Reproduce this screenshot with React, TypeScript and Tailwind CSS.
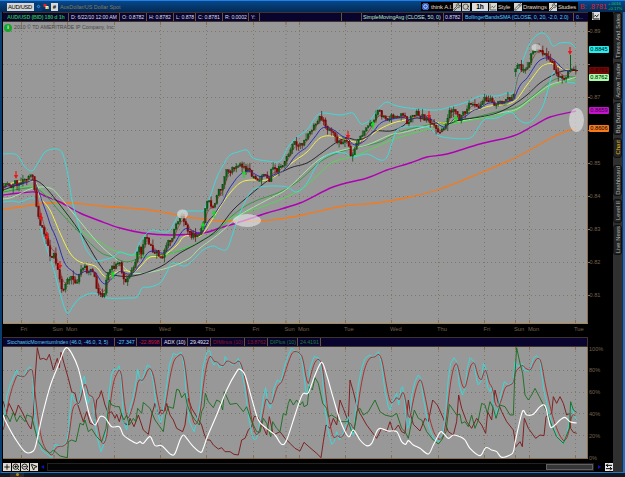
import { ArrowLeftRight, ChartLine, Disc, MousePointer2, Pencil, Plus, Search, Wrench, ZoomIn, ZoomOut } from "lucide-react"

type Point = [number, number]

const parse = (s: string): Point[] => s.split(" ").map((p) => p.split(",").map(Number) as Point)

const at = (pts: Point[], x: number) => {
  const i = pts.findIndex((p) => p[0] >= x)
  if (i === -1) return pts[pts.length - 1][1]
  if (i === 0) return pts[0][1]
  const [x0, y0] = pts[i - 1]
  const [x1, y1] = pts[i]
  return y0 + ((y1 - y0) * (x - x0)) / (x1 - x0 || 1)
}

// Catmull-Rom spline through the points
function smooth(s: string) {
  const p = parse(s)
  let d = `M${p[0]}`
  for (let i = 0; i < p.length - 1; i++) {
    const a = p[i - 1] ?? p[i]
    const b = p[i]
    const c = p[i + 1]
    const e = p[i + 2] ?? c
    d += `C${b[0] + (c[0] - a[0]) / 6},${b[1] + (c[1] - a[1]) / 6} ${c[0] - (e[0] - b[0]) / 6},${c[1] - (e[1] - b[1]) / 6} ${c}`
  }
  return d
}

function ema(values: Point[], alpha: number) {
  let y = values[0][1]
  return values.map(([x, v]) => {
    y += (v - y) * alpha
    return `${x},${y.toFixed(1)}`
  }).join(" ")
}

const price = parse(
  "3,188 8,181 11,187 15,183 20,182 26,180 31,175 33,179 35,190 36,205 39,221 43,232 47,242 50,257 54,253 57,268 60,280 62,291 66,285 70,276 76,284 80,270 84,264 87,275 92,266 95,280 98,292 101,297 104,292 108,275 112,268 118,262 121,266 124,280 128,278 131,270 135,266 138,246 141,255 144,238 148,240 151,248 156,252 160,258 163,254 166,246 172,238 177,222 181,216 185,220 190,235 196,237 200,233 203,225 206,202 210,204 213,208 218,190 222,191 226,170 231,171 237,164 242,166 248,169 253,179 259,182 264,172 269,182 272,168 277,172 283,164 288,155 292,144 298,144 305,143 310,130 315,124 320,115 325,126 330,131 335,137 341,144 347,140 351,158 356,145 362,137 370,125 378,112 385,117 395,117 402,116 405,119 408,126 412,116 417,114 423,117 428,120 433,127 440,133 445,130 448,114 455,109 459,122 464,113 470,103 477,107 485,97 491,101 496,106 502,101 510,98 514,97 516,64 520,66 525,73 530,58 536,48 543,54 550,58 556,71 560,78 565,77 570,70 573,68 576,70"
)

const noise = (i: number) => {
  const v = Math.sin(i * 12.9898 + 4.1) * 43758.5453
  return v - Math.floor(v)
}

const STEP = 1.94
const closes: Point[] = Array.from({ length: 296 }, (_, i) => {
  const x = 3.5 + i * STEP
  return [x, at(price, x) + (noise(i) - 0.5) * 6]
})
const candles = closes.map(([x, close], i) => {
  const prev = closes[i - 1]?.[1] ?? close
  const open = Math.abs(close - prev) > 18 ? close + 3 : prev
  return {
    x,
    up: close < open,
    top: Math.min(open, close),
    h: Math.max(1.4, Math.abs(close - open)),
    high: Math.min(open, close) - noise(i + 500) ** 2 * 6,
    low: Math.max(open, close) + noise(i + 900) ** 2 * 6,
  }
})
const trend = closes.map(([x]) => [x, at(price, x)] as Point)

const averages = [
  { c: "#f47a1c", w: 1.3, s: "3,209 20,207 37,204 53,203 73,203 100,206 140,209 167,213 187,217 203,219 220,221 260,221 280,219 307,214 343,206 377,203 410,197 440,189 480,173 517,157 553,137 576,128" },
  { c: "#b000b4", w: 1.4, s: "3,195 20,193 35,192 45,196 60,202 80,213 100,221 120,228 143,233 170,235 203,233 220,228 243,221 267,213 300,203 333,187 367,178 387,170 410,163 427,157 447,154 480,144 513,136 533,126 550,117 576,111" },
  { c: "#2a9a38", w: 0.9, s: "3,192 33,188 47,197 60,212 80,233 100,252 113,257 127,262 143,257 163,255 187,248 210,236 217,232 233,215 253,202 280,192 300,180 320,162 340,152 360,147 380,142 400,132 433,124 467,119 500,111 517,107 533,96 550,82 563,77 576,77" },
  { c: "#48e048", w: 0.9, s: "3,191 33,186 47,194 60,206 80,230 100,242 113,250 133,255 160,256 180,250 200,242 217,230 233,217 267,205 300,190 320,173 333,162 357,155 387,142 400,137 433,128 467,121 500,115 517,110 533,98 550,87 567,81 576,80" },
  { c: "#a6eba6", w: 0.9, s: "3,199 13,197 33,188 50,188 60,197 73,213 87,230 100,245 117,260 133,273 160,270 187,260 200,248 220,233 240,215 267,200 287,189 307,170 323,157 343,150 367,145 390,135 405,132 433,125 467,120 500,113 517,109 533,97 550,85 567,80 576,77" },
  { c: "#1c1c24", w: 0.9, s: "3,190 20,184 32,180 43,185 60,205 80,232 100,265 110,274 133,276 160,267 180,253 200,242 217,230 233,210 250,195 270,179 290,168 307,163 323,152 337,142 347,138 357,140 367,137 375,131 391,131 403,126 413,118 433,121 447,124 460,120 480,117 497,113 513,105 527,95 540,83 553,75 563,71 576,70" },
  { c: "#f4f04c", w: 1, s: "3,185 33,181 40,197 50,210 60,233 70,253 80,262 95,266 103,275 108,277 115,273 123,270 133,272 140,267 150,257 163,256 177,245 185,236 200,236 210,223 220,207 230,193 240,183 250,180 267,180 280,173 293,162 307,152 320,138 333,136 347,140 357,142 367,138 380,129 393,123 405,120 417,117 427,118 437,122 447,123 457,118 467,112 480,109 490,106 513,102 527,85 540,68 547,64 553,64 563,69 576,71" },
  { c: "#35e0e0", w: 0.9, s: "3,154 15,154 20,159 25,167 32,171 38,163 45,152 54,149 60,150 63,155 67,170 72,200 78,223 85,247 95,260 103,260 113,257 120,252 133,255 140,242 147,233 153,230 163,232 170,230 180,213 190,211 202,211 205,208 210,197 217,177 225,162 230,155 238,152 247,150 253,158 267,161 280,161 288,147 297,137 307,130 315,118 322,113 340,115 350,113 354,114 360,123 363,124 370,120 380,107 387,102 397,106 417,109 437,110 450,107 467,102 480,96 497,96 507,93 513,93 517,80 523,60 530,43 537,35 543,33 548,37 553,46 560,43 570,43 576,48" },
  { c: "#35e0e0", w: 0.9, s: "3,202 13,201 20,202 33,198 37,207 43,237 53,267 60,293 67,313 73,306 80,298 93,293 107,298 127,298 137,297 142,288 150,287 160,283 167,272 172,263 185,266 195,258 203,250 213,246 220,249 227,249 233,233 240,213 250,193 260,187 275,186 287,187 297,192 307,183 315,168 323,158 333,153 345,153 353,157 367,154 380,160 387,157 393,140 400,128 427,127 437,135 450,138 470,138 478,128 485,119 497,118 507,113 513,113 517,118 525,123 533,120 542,108 547,93 553,73 558,77 567,82 576,83" },
]

// Lower study, three units per pixel
const smi = "9,315 20,215 30,180 50,135 58,158 72,155 80,135 90,125 97,140 100,200 105,270 115,345 125,375 155,398 160,375 165,358 185,365 200,350 205,320 212,240 216,205 222,225 235,240 240,215 247,170 253,153 258,185 264,235 272,215 280,220 283,280 292,340 303,380 312,355 320,310 326,215 334,150 342,132 350,135 357,122 364,160 370,290 380,315 390,250 400,215 408,170 413,133 418,155 425,172 432,150 442,120 450,125 460,170 470,255 482,292 490,260 500,180 508,120 520,85 530,90 543,82 552,120 558,200 568,290 582,320 590,290 600,240 608,130 618,90 622,80 630,78 636,110 642,120 650,108 658,127 672,122 675,95 690,115 700,120 715,100 722,125 735,190 745,270 755,325 762,345 770,340 780,290 790,220 797,188 803,235 810,250 818,220 822,190 832,165 842,172 855,120 865,90 875,70 895,85 905,100 912,150 918,205 925,190 930,130 942,95 955,98 965,130 975,250 985,320 995,358 1003,350 1010,320 1018,345 1027,330 1035,310 1045,275 1052,300 1060,330 1068,250 1075,180 1085,130 1095,100 1110,90 1120,98 1135,80 1145,120 1155,200 1165,245 1170,255 1180,225 1190,205 1196,240 1203,190 1208,185 1215,240 1222,310 1228,300 1235,210 1245,170 1255,150 1262,160 1270,220 1285,300 1300,340 1318,350 1330,320 1338,250 1345,160 1352,115 1362,98 1370,110 1378,180 1387,210 1395,190 1402,130 1410,98 1422,110 1430,165 1435,180 1445,165 1450,115 1458,130 1462,185 1470,200 1475,185 1485,275 1495,245 1505,200 1513,170 1525,180 1540,170 1545,110 1552,125 1568,115 1572,135 1590,138 1600,100 1610,92 1620,105 1632,200 1645,250 1655,295 1675,340 1690,357 1700,330 1708,290 1713,235 1722,270 1730,285"
const smiPoints = parse(smi)
const signal = ema(Array.from({ length: 430 }, (_, i) => [9 + i * 4, at(smiPoints, 9 + i * 4)] as Point), 0.36)

const diMinus = "9,228 20,262 27,235 45,272 55,240 65,258 85,300 93,312 100,270 106,150 112,68 120,103 130,100 140,105 148,88 160,135 172,100 178,128 183,82 192,115 205,160 215,200 225,205 232,235 250,290 260,260 270,295 282,300 290,225 298,215 304,197 315,240 325,265 335,260 345,280 350,268 358,290 365,265 372,295 385,300 390,280 402,305 415,270 430,315 445,328 455,270 465,235 475,270 482,255 495,258 500,235 510,270 520,285 530,310 548,320 555,300 565,220 575,250 590,275 605,300 612,325 620,345 630,345 640,360 655,372 665,368 675,380 690,380 702,388 715,390 725,345 735,340 745,315 755,305 762,275 772,275 785,295 800,330 808,275 820,330 840,320 855,340 870,355 885,370 900,378 912,352 930,368 950,385 963,398 970,350 978,300 990,310 1000,280 1010,300 1020,225 1030,250 1045,290 1050,165 1060,200 1070,240 1080,265 1100,300 1130,340 1145,310 1160,320 1170,290 1180,320 1195,300 1205,320 1215,325 1225,225 1232,270 1240,298 1260,318 1275,280 1285,290 1298,225 1312,240 1330,280 1345,320 1360,330 1370,290 1376,210 1385,250 1400,290 1415,310 1430,280 1445,300 1457,325 1463,260 1475,285 1485,195 1495,235 1505,260 1520,290 1540,315 1548,365 1560,350 1567,365 1573,280 1585,310 1607,340 1620,330 1632,332 1638,275 1655,265 1660,215 1670,235 1680,215 1690,235 1700,270 1710,265 1712,310 1720,322 1730,325"
const diPlus = "9,275 20,270 30,290 40,262 50,290 60,272 75,290 80,270 95,275 105,315 115,350 130,370 150,385 160,375 180,393 202,398 205,350 215,345 228,350 240,295 250,300 255,285 265,320 275,312 290,335 305,350 318,310 328,225 335,240 350,245 358,245 365,270 372,285 380,270 388,300 400,280 407,290 413,250 425,265 430,232 450,250 465,285 490,320 497,270 505,245 520,250 530,193 537,195 545,218 555,205 562,240 572,265 585,285 598,300 605,260 612,245 616,205 625,230 640,248 650,225 660,230 668,255 673,200 690,238 710,235 730,260 740,245 755,290 770,320 780,322 790,280 800,295 812,335 818,290 830,310 840,320 850,265 858,270 865,235 870,222 880,240 890,225 900,240 908,230 912,245 922,240 928,185 937,195 945,158 955,175 968,235 980,250 985,275 995,270 1010,280 1020,290 1045,290 1055,320 1062,320 1070,260 1080,250 1090,270 1105,260 1125,225 1140,260 1155,270 1175,275 1190,265 1205,310 1215,320 1225,340 1235,290 1243,255 1255,280 1265,285 1280,320 1300,345 1315,357 1325,345 1338,320 1348,238 1360,255 1370,270 1380,268 1385,295 1395,290 1405,305 1415,270 1425,310 1435,285 1445,235 1455,240 1462,265 1470,230 1480,250 1488,280 1500,240 1515,245 1530,270 1540,270 1544,160 1550,68 1560,115 1568,145 1575,210 1585,225 1595,210 1605,190 1618,215 1628,235 1640,260 1655,300 1670,335 1690,355 1698,335 1708,310 1712,230 1720,255 1730,262"
const adx = "9,270 20,295 45,340 75,380 100,378 110,350 125,280 150,185 175,120 190,80 200,68 215,85 235,130 255,215 270,275 285,300 300,275 315,278 335,305 358,305 370,330 390,345 410,355 420,350 430,355 450,335 465,362 485,362 512,388 525,385 540,345 550,330 560,340 580,365 602,382 610,370 622,335 650,270 680,195 710,140 720,133 735,150 755,220 775,285 800,310 825,330 845,358 860,345 885,270 900,225 910,205 925,203 945,150 965,112 980,150 1000,220 1020,285 1045,335 1060,315 1080,345 1100,362 1115,355 1130,320 1140,310 1165,318 1190,320 1205,350 1217,358 1225,347 1240,360 1260,370 1285,387 1300,360 1320,322 1330,325 1345,340 1360,330 1380,335 1395,345 1410,370 1440,392 1457,368 1475,375 1490,380 1505,397 1530,390 1540,380 1548,340 1567,260 1580,270 1600,268 1620,245 1635,242 1645,280 1652,307 1665,300 1680,285 1695,277 1710,290 1730,294"

const days = [21.5, 54, 67.5, 114.5, 160.5, 206.5, 253.5, 286, 299.5, 345.5, 391.5, 438.5, 484.5, 515.5, 529.5, 575.5]
const dayNames = ["Fri", "Sun", "Mon", "Tue", "Wed", "Thu", "Fri", "Sun", "Mon", "Tue", "Wed", "Thu", "Fri", "Sun", "Mon", "Tue"]
const levels = [31.5, 64.5, 97.5, 130.5, 163.5, 196.5, 229.5, 262.5, 295.5]

const sells = [[16, 175], [41, 217], [47, 236], [60, 265], [348, 135], [429, 115], [570, 51]]
const buys = [[113, 275], [203, 226], [214, 214], [244, 174], [373, 125], [456, 119]]

function PriceChart() {
  return (
    <svg viewBox="3 22 584 301" className="block h-[301px] w-[584px] bg-[#989898]">
      <g stroke="#77705a" strokeWidth="0.8" strokeDasharray="1 3">
        {days.map((x) => <path key={x} d={`M${x} 22V323`} />)}
        {levels.map((y) => <path key={y} d={`M3 ${y}H587`} />)}
      </g>
      <g stroke="#8c7047">
        {days.map((x) => <path key={x} d={`M${x} 22v3M${x} 320v3`} />)}
      </g>
      <g fill="none">
        {averages.map((a, i) => <path key={i} d={smooth(a.s)} stroke={a.c} strokeWidth={a.w} />)}
      </g>
      {candles.map((c) => (
        <g key={c.x} fill={c.up ? "#046014" : "#860404"} stroke={c.up ? "#064a10" : "#680606"}>
          <path d={`M${c.x} ${c.high}V${c.low}`} strokeWidth="0.7" />
          <rect x={c.x - 0.85} y={c.top} width="1.7" height={c.h} strokeWidth="0.3" />
        </g>
      ))}
      <g fill="none">
        <polyline points={ema(trend, 0.16)} stroke="#2222b0" strokeWidth="0.9" />
        <polyline points={ema(trend, 0.4)} stroke="#9a2222" strokeWidth="0.6" />
      </g>
      <path d="M570.5 55V72" stroke="#0a6018" />
      <path d="M572 70.5h6" stroke="#7a0808" />
      <g fill="#e8e8e8" fillOpacity="0.62">
        <ellipse cx="182.5" cy="214" rx="5.5" ry="4.5" />
        <ellipse cx="247" cy="220.5" rx="14" ry="6.5" />
        <ellipse cx="536" cy="47.5" rx="4.5" ry="3.5" />
        <ellipse cx="576.5" cy="120" rx="7.5" ry="12" />
      </g>
      {sells.map(([x, y]) => <path key={x} d={`M${x - 0.6} ${y - 4}h1.2v4h1.6L${x} ${y + 4}l-2.2-4h1.6z`} fill="#f01414" />)}
      {buys.map(([x, y]) => <path key={x} d={`M${x - 0.6} ${y + 4}h1.2v-4h1.6L${x} ${y - 4}l-2.2 4h1.6z`} fill="#10e020" />)}
    </svg>
  )
}

function StudyChart() {
  return (
    <svg viewBox="9 66 1752 333" className="block h-[111px] w-[584px] bg-[#989898]">
      <g stroke="#77705a" strokeWidth="2.4" strokeDasharray="3 9">
        {days.map((x) => <path key={x} d={`M${x * 3} 66V399`} />)}
        {[136.5, 202.5, 265.5, 331.5].map((y) => <path key={y} d={`M9 ${y}H1761`} />)}
      </g>
      <g stroke="#8c7047" strokeWidth="3">
        {days.map((x) => <path key={x} d={`M${x * 3} 66v9M${x * 3} 390v9`} />)}
      </g>
      <g fill="none" strokeWidth="2.8">
        <polyline points={diMinus} stroke="#7c1a1a" />
        <polyline points={smi} stroke="#35dcdc" />
        <polyline points={signal} stroke="#a82c2c" />
        <polyline points={diPlus} stroke="#1c6e22" />
        <path d={smooth(adx)} stroke="#ffffff" strokeWidth="3.4" />
      </g>
    </svg>
  )
}

const cell = "shrink-0 overflow-hidden whitespace-nowrap border-r border-[#66513f] pl-[2px]"

function PriceHeader() {
  return (
    <div className="flex h-[10px] w-[585px] border-y border-[#3f3330] bg-[#08042e] text-[5.2px] leading-[9px] tracking-[-0.08px] text-[#dcdcec]">
      <div className={`${cell} w-[66px] pl-[4px] text-[5.3px] font-bold tracking-[-0.15px] text-[#28b44c]`}>AUD/USD (BID) 180 d 1h</div>
      <div className={`${cell} w-[51px]`}>D: 6/22/10 12:00 AM</div>
      <div className={`${cell} w-[27px]`}>O: 0.8782</div>
      <div className={`${cell} w-[27px]`}>H: 0.8782</div>
      <div className={`${cell} w-[22px]`}>L: 0.878</div>
      <div className={`${cell} w-[27px]`}>C: 0.8781</div>
      <div className={`${cell} w-[26px]`}>R: 0.0002</div>
      <div className={`${cell} w-[11px]`}>Y:</div>
      <div className={`${cell} w-[82px]`} />
      <div className={`${cell} w-[20px]`} />
      <div className={`${cell} w-[82px] pl-px text-[5.3px] text-[#b9ecc0]`}>SimpleMovingAvg (CLOSE, 50, 0)</div>
      <div className={`${cell} w-[19px] pl-px`}>0.8782</div>
      <div className={`${cell} w-[111px] text-[5.3px] text-[#4fd4ec]`}>BollingerBandsSMA (CLOSE, 0, 20, -2.0, 2.0)</div>
      <div className="pl-[2px] text-[#4fb4dc]">0...</div>
    </div>
  )
}

function StudyHeader() {
  return (
    <div className="flex h-[10px] w-[585px] border border-l-0 border-[#3f3330] bg-[#08042e] text-[5.3px] leading-[8px] tracking-[-0.05px] text-[#e4e4ee]">
      <div className={`${cell} w-[112px] pl-[4px] text-[5.2px] tracking-[-0.06px] text-[#58c8ee]`}>StochasticMomentumIndex (46.0, -46.0, 3, 5)</div>
      <div className={`${cell} w-[22px] text-[#58d4ee]`}>-27.347</div>
      <div className={`${cell} w-[25px] text-[#c81c24]`}>-22.8998</div>
      <div className={`${cell} w-[26px]`}>ADX (10)</div>
      <div className={`${cell} w-[23px]`}>29.4922</div>
      <div className={`${cell} w-[34px] text-[#8c1828]`}>DIMinus (10)</div>
      <div className={`${cell} w-[23px] text-[#8c1828]`}>13.8762</div>
      <div className={`${cell} w-[30px] text-[#1c7c38]`}>DIPlus (10)</div>
      <div className={`${cell} w-[23px] text-[#1c7c38]`}>24.4191</div>
    </div>
  )
}

function TitleBar() {
  return (
    <header className="flex h-[12px] items-center border-t border-[#2280e4] bg-linear-to-b from-[#07488a] to-[#032a54] text-[6.3px] leading-[8px] whitespace-nowrap">
      <div className="ml-[7px] h-[8px] w-[27px] bg-[#d6d6d6] pl-px text-[5.8px] tracking-[-0.3px] text-black">AUD/USD</div>
      <div className="flex h-[8px] w-[8px] items-center justify-center bg-[#063a70]">
        <span className="size-[3px] rotate-45 border border-[#2684d0]" />
      </div>
      <svg viewBox="0 0 5 6" className="ml-px h-[6px] w-[6px]">
        <path d="M0 0h3v3H0z" fill="#e22" />
        <path d="M2 2h3v3H2z" fill="#eee" />
        <path d="M3 3h2v2H3z" fill="#dc2" />
      </svg>
      <div className="ml-[2px] h-[8px] w-[7px] bg-[#d8d8d8] text-center text-[6px] font-bold text-black">#</div>
      <div className="ml-[2px] text-[5.4px] text-[#8a7a5c]">AusDollar/US Dollar Spot</div>
      <div className="ml-auto flex h-[9px] w-[157px] items-center bg-black text-[5.9px] text-[#e2d8cc]">
        <Disc className="ml-px size-[7px] shrink-0 rounded-full bg-[#cde0ff] text-[#1c50c0]" strokeWidth={5} />
        <span className="ml-[2px] w-[22px] tracking-[-0.1px]">think A.I.</span>
        <Wrench className="size-[8px] shrink-0 bg-[#c8c8c0] text-[#222]" />
        <Search className="ml-px size-[8px] shrink-0 bg-[#c8c8c0] text-[#222]" />
        <span className="ml-[2px] h-[8px] w-[16px] bg-[#dedede] text-center text-[6.6px] font-bold text-black">1h</span>
        <ChartLine className="ml-px size-[8px] shrink-0 bg-[#d8d8d0] text-[#222]" />
        <span className="ml-px w-[16px] tracking-[-0.2px]">Style</span>
        <Pencil className="size-[8px] shrink-0 bg-[#d8d8d0] text-[#222]" />
        <span className="ml-px w-[26px] tracking-[-0.1px]">Drawings</span>
        <Wrench className="size-[8px] shrink-0 bg-[#d8d8d0] text-[#222]" />
        <span className="ml-px w-[19px] tracking-[-0.25px]">Studies</span>
      </div>
      <div className="ml-[2px] w-[28px] text-[7px] tracking-[0.1px] text-[#e01c28]">B: .8781</div>
      <div className="mr-[2px] w-[15px] text-[4.4px] leading-[4.5px] tracking-[-0.1px] text-[#14c850]">
        <div>+.0016</div>
        <div>+0.17%</div>
      </div>
    </header>
  )
}

const tabs = [
  { label: "Times And Sales", cls: "h-[47px]" },
  { label: "Active Trader", cls: "h-[38px]" },
  { label: "Big Buttons", cls: "h-[33px]" },
  { label: "Chart", cls: "h-[20px] text-[#e8b820]" },
  { label: "Dashboard", cls: "mt-[5px] h-[31px]" },
  { label: "Level II", cls: "h-[24px]" },
  { label: "Live News", cls: "h-[30px]" },
]

function SideTabs() {
  return (
    <nav className="flex w-[9px] shrink-0 flex-col gap-[2.5px] bg-[#303030]">
      {tabs.map((t) => (
        <div key={t.label} className={`flex w-[9px] shrink-0 items-center justify-center rounded-[3px] border border-[#101010] bg-[#242424] text-[5.9px] leading-[8px] text-[#b4b4b4] ${t.cls}`}>
          <span className="rotate-180 whitespace-nowrap [writing-mode:vertical-rl]">{t.label}</span>
        </div>
      ))}
    </nav>
  )
}

function PriceAxis() {
  return (
    <div className="relative h-[301px] w-[25px] border-l border-[#8c7047] text-[5.6px] leading-[8px] text-[#76614b]">
      <div className="flex flex-col pt-[5px]">
        {["0.89", "", "0.87", "", "0.85", "0.84", "0.83", "0.82", "0.81"].map((l, i) => (
          <div key={i} className="flex h-[33px] items-start">
            <span className="mt-[4px] h-px w-[1.5px] bg-[#8c7047]" />
            {l}
          </div>
        ))}
      </div>
      <div className="absolute top-[24px] left-[1px] flex w-[20px] flex-col text-center text-[5.7px] leading-[7px] text-black">
        <span className="rounded-[1px] bg-[#24f0f0]">0.8845</span>
        <span className="mt-[14px] bg-[#700808] text-[#380000]">0.8781</span>
        <span className="rounded-[1px] bg-[#a6fca6]">0.8762</span>
        <span className="mt-[26px] rounded-[1px] bg-[#c414cc] text-[#400048]">0.8659</span>
        <span className="mt-[11px] rounded-[1px] bg-[#fa781c]">0.8606</span>
      </div>
    </div>
  )
}

function DayLabels() {
  return (
    <div className="relative h-[14px] w-[585px] border-t border-[#a68a5c] text-[5.8px] leading-[11px] text-[#76614b]">
      {days.map((x, i) => (
        <span key={x} className="absolute top-0" style={{ left: x - (dayNames[i] === "Fri" ? 4 : 4.5) }}>{dayNames[i]}</span>
      ))}
    </div>
  )
}

function Toolbar() {
  return (
    <footer className="flex h-[10px] items-center bg-black">
      {[Plus, ZoomIn, ZoomOut, MousePointer2].map((Icon, i) => (
        <Icon key={i} className="mr-px size-[8px] shrink-0 bg-[#dedad0] text-black" strokeWidth={2.6} />
      ))}
      <span className="ml-[2px] border-y-[2px] border-r-[3px] border-y-transparent border-r-[#1010c0]" />
      <div className="ml-[3px] flex h-[8px] w-[549px] justify-end border border-[#222] bg-[#040404]">
        <div className="h-[6px] w-[47px] border border-[#606060] bg-[#363636] bg-[radial-gradient(#5c5c5c_40%,transparent_45%)] bg-[length:2px_2px]" />
      </div>
      <span className="ml-[4px] border-y-[2px] border-l-[3px] border-y-transparent border-l-[#1010c0]" />
      <ArrowLeftRight className="ml-[4px] h-[8px] w-[8px] shrink-0 bg-[#e8e8e8] text-black" strokeWidth={3} />
    </footer>
  )
}

export default function App() {
  return (
    <div className="h-[477px] w-[625px] overflow-hidden bg-black font-['Liberation_Sans',sans-serif]">
      <TitleBar />
      <div className="flex h-[461px] border-r-[2px] border-b border-l-[2px] border-r-[#1670cc] border-b-[#2878c8] border-l-[#0b3e70]">
        <div className="flex w-[611px] shrink-0 flex-col pl-px">
          <div className="flex">
            <PriceHeader />
            <ChartLine className="ml-[4px] size-[8px] bg-[#dedede] text-black" strokeWidth={3} />
          </div>
          <div className="relative flex">
            <PriceChart />
            <PriceAxis />
            <div className="absolute top-[1px] left-[1px] flex items-center text-[5.2px] leading-[9px] text-[#484848]">
              <span className="flex size-[8px] items-center justify-center rounded-full bg-[#16a62c] font-bold text-white">i</span>
              <span className="ml-[2px] whitespace-nowrap">2010 © TD AMERITRADE IP Company, Inc.</span>
            </div>
          </div>
          <DayLabels />
          <StudyHeader />
          <div className="flex">
            <StudyChart />
            <div className="flex h-[111px] w-[25px] flex-col border-l border-[#8c7047] text-[5.6px] leading-[8px] text-[#76614b]">
              {["100%", "80%", "60%", "40%", "20%", "0%"].map((l) => <span key={l} className="-mt-[2px] mb-[15.9px] pl-px">{l}</span>)}
            </div>
          </div>
          <div className="mr-[1px] h-[5px] w-[585px] border-t border-[#8c7047]" />
          <Toolbar />
        </div>
        <SideTabs />
        <div className="flex-1 bg-[#292d35]" />
      </div>
      <div className="flex h-[4px] bg-[#101820]">
        <div className="ml-[10px] flex w-[14px] justify-center bg-[#2c2a24]">
          <span className="size-[3px] rounded-full bg-[#b49018]" />
        </div>
      </div>
    </div>
  )
}
